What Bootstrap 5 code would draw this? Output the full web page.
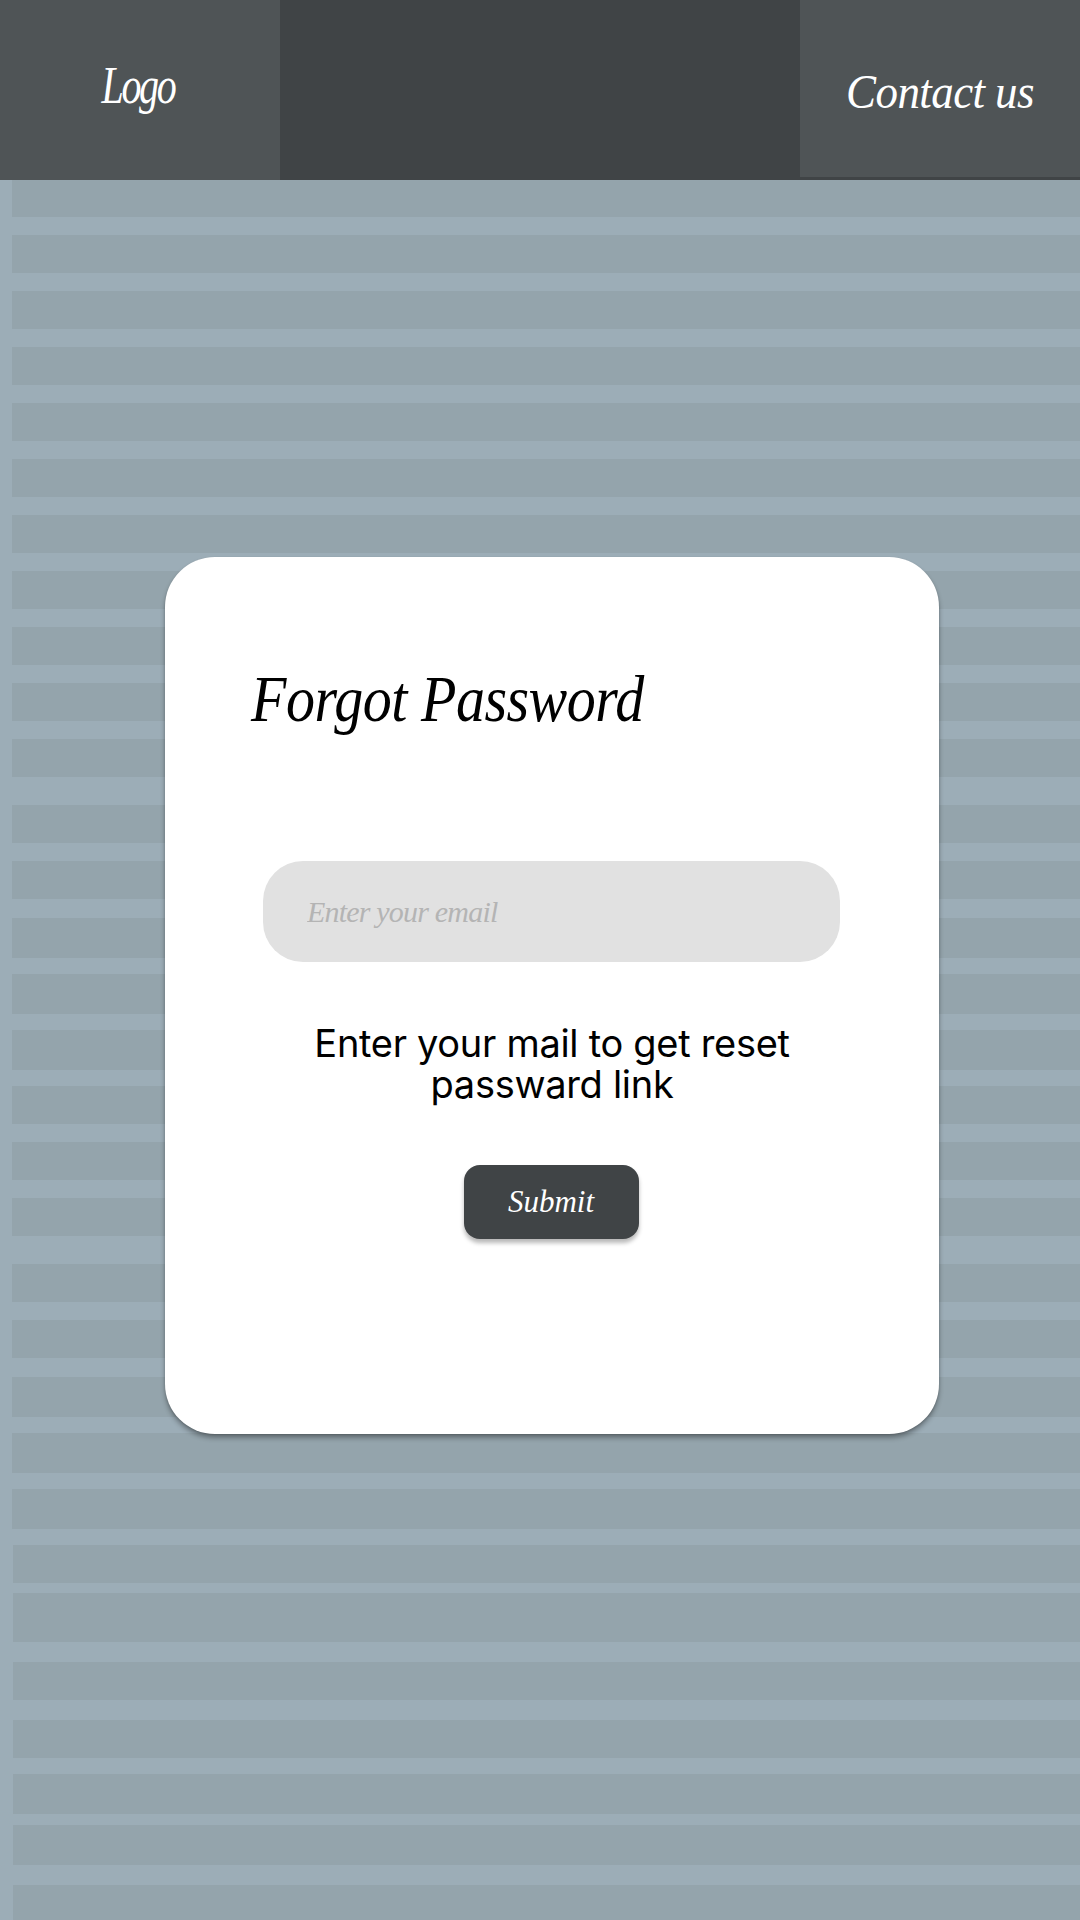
<!DOCTYPE html>
<html lang="en">
<head>
<meta charset="utf-8">
<meta name="viewport" content="width=device-width, initial-scale=1">
<title>Forgot Password</title>
<link href="https://cdn.jsdelivr.net/npm/bootstrap@5.3.0/dist/css/bootstrap.min.css" rel="stylesheet">
<style>
body { background: #9cadb7; color: #000; }
.script-face { font-family: "Liberation Serif", serif; font-style: italic; white-space: nowrap; }
.page { height: 1920px; }
.top-bar { height: 180px; background: #404446; }
.tab { width: 280px; background: #4f5456; color: #fff; text-decoration: none; }
.tab-logo { height: 180px; padding-bottom: 8px; padding-right: 4px; }
.tab-contact { height: 177px; padding-top: 6px; }
.logo-text { font-size: 40px; line-height: 48px; letter-spacing: -2.3px; transform: scaleY(1.3); }
.contact-text { font-size: 45px; line-height: 46px; letter-spacing: -.6px; transform: scaleY(1.08); }
.stripes { fill: #94a4ac; shape-rendering: crispEdges; }
.panel { width: 774px; height: 877px; margin: 377px 0 0 165px; padding: 115px 98px 0; border: 0; border-radius: 50px; box-shadow: 0 4px 5px rgba(0,0,0,.32), 0 1px 2px rgba(0,0,0,.15); }
.title-text { font-size: 58px; line-height: 60px; margin: 0 0 129px -12px; letter-spacing: -.5px; font-weight: 400; transform: scaleY(1.14); transform-origin: 0 83%; }
.email-box { width: 577px; height: 101px; border: 0; border-radius: 40px; background: #e1e1e1; padding: 0 44px; font-size: 30px; letter-spacing: -.8px; }
.email-box::placeholder { color: #b4b4b4; opacity: 1; }
.hint { font: 400 38px/41px Inter, sans-serif; margin: 61px 0 60px; letter-spacing: -.3px; }
.send { width: 175px; height: 74px; margin-right: 2px; border: 0; border-radius: 16px; background: #404446; color: #fff; font-size: 31px; line-height: 34px; box-shadow: 0 4px 4px rgba(0,0,0,.28); }
.send:hover { background: #404446; color: #fff; }
</style>
</head>
<body>
<div class="page position-relative overflow-hidden">
  <svg class="stripes position-absolute top-0 start-0" width="1080" height="1920" aria-hidden="true">
    <path d="M12 179h1068v38H12zM12 235h1068v38H12zM12 291h1068v38H12zM12 347h1068v38H12zM12 403h1068v38H12zM12 459h1068v38H12zM12 515h1068v38H12zM12 571h1068v38H12zM12 627h1068v38H12zM12 683h1068v38H12zM12 739h1068v38H12z"/>
    <path d="M12 805h1068v38H12zM12 861h1068v38H12zM12 918h1068v40H12zM12 974h1068v40H12zM12 1030h1068v40H12zM12 1086h1068v38H12zM12 1142h1068v38H12zM12 1198h1068v38H12z"/>
    <path d="M12 1264h1068v38H12zM12 1320h1068v38H12zM12 1377h1068v40H12zM12 1433h1068v40H12zM12 1489h1068v40H12z"/>
    <path d="M13 1545h1067v38H13zM13 1593h1067v49H13zM13 1662h1067v38H13zM13 1720h1067v38H13zM13 1774h1067v40H13zM13 1825h1067v40H13zM13 1885h1067v35H13z"/>
  </svg>
  <header class="top-bar d-flex justify-content-between align-items-start position-relative">
    <a class="tab tab-logo d-flex align-items-center justify-content-center" href="#"><span class="script-face logo-text">Logo</span></a>
    <a class="tab tab-contact d-flex align-items-center justify-content-center" href="#"><span class="script-face contact-text">Contact us</span></a>
  </header>
  <main class="d-flex">
    <form class="card panel d-flex flex-column">
      <h1 class="script-face title-text">Forgot Password</h1>
      <input type="email" class="form-control script-face email-box" placeholder="Enter your email" aria-label="Email">
      <p class="hint text-center">Enter your mail to get reset<br>passward link</p>
      <button type="button" class="btn send script-face align-self-center">Submit</button>
    </form>
  </main>
</div>
<script src="https://cdn.jsdelivr.net/npm/bootstrap@5.3.0/dist/js/bootstrap.bundle.min.js"></script>
</body>
</html>
